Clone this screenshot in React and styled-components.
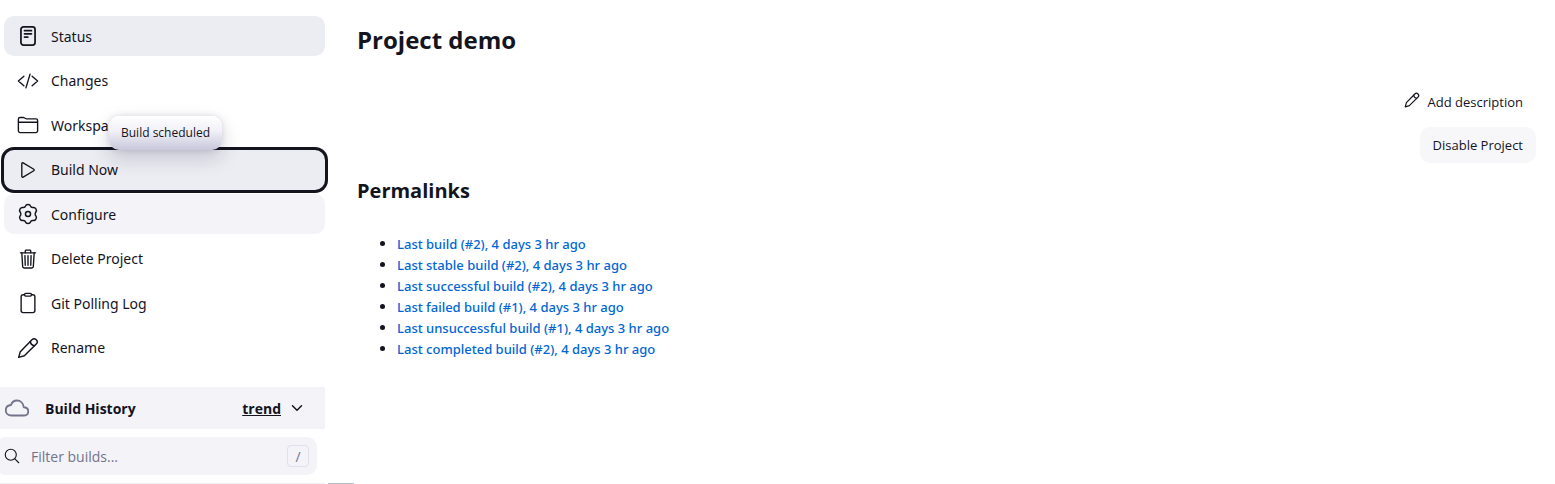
import React from "react";
import styled, { createGlobalStyle, css } from "styled-components";
import {
  IoChevronDownOutline,
  IoClipboardOutline,
  IoCloudOutline,
  IoCodeSlashOutline,
  IoFolderOutline,
  IoPlayOutline,
  IoSearchOutline,
  IoTrashOutline,
} from "react-icons/io5";

const GlobalStyle = createGlobalStyle`
  *, *::before, *::after { box-sizing: border-box; }
  body {
    margin: 0;
    background: #fff;
    color: #14141f;
    font-family: "Open Sans", "Noto Sans", sans-serif;
    font-size: 14px;
    line-height: 21px;
  }
`;

const Page = styled.div`
  display: grid;
  grid-template-columns: 325px 1fr;
  gap: 32px;
`;

const Sidebar = styled.aside`
  display: flex;
  flex-direction: column;
`;

const Tasks = styled.nav`
  display: flex;
  flex-direction: column;
  justify-content: space-between;
  min-height: 352px;
  margin: 16px 0 19px 4px;
`;

const TaskSlot = styled.div`
  position: relative;
`;

const Task = styled.a`
  display: flex;
  align-items: center;
  gap: 12px;
  height: 40px;
  padding: 0 13px;
  border-radius: 10px;
  color: #14141f;
  font-family: "Noto Sans", sans-serif;
  text-decoration: none;
  background: ${(p) => p.$fill || "transparent"};
  ${(p) => p.$focused && css`box-shadow: 0 0 0 3px #14141f;`}

  svg {
    flex: none;
    width: 22px;
    height: 22px;
  }
`;

const Tooltip = styled.div`
  position: absolute;
  z-index: 1;
  left: 105px;
  bottom: 40px;
  padding: 7px 12px;
  border-radius: 10px;
  background: linear-gradient(#ffffff, #f0f0f6 45%, #c8c7dc);
  box-shadow: 0 0 6px rgba(20, 20, 60, 0.12), 0 8px 20px rgba(20, 20, 60, 0.18);
  font-size: 12px;
  line-height: 20px;
  white-space: nowrap;
`;

const HistoryHeader = styled.header`
  display: flex;
  align-items: center;
  height: 42px;
  padding: 0 20px 0 5px;
  background: #f3f3f8;
`;

const CloudIcon = styled(IoCloudOutline)`
  width: 24px;
  height: 24px;
  color: #73738c;

  path {
    stroke-width: 40px;
  }
`;

const HistoryTitle = styled.h2`
  flex: 1;
  margin: 0 0 0 16px;
  font-size: 14px;
  line-height: 21px;
  font-weight: 700;
`;

const TrendLink = styled.a`
  margin-right: 8px;
  color: inherit;
  font-weight: 700;
`;

const CollapseButton = styled.button`
  display: flex;
  padding: 0;
  border: 0;
  background: none;
  color: inherit;

  svg {
    width: 16px;
    height: 16px;
  }
`;

const FilterBar = styled.label`
  display: flex;
  align-items: center;
  gap: 10px;
  height: 38px;
  margin: 8px 8px 8px 0;
  padding: 0 8px 0 3px;
  border-radius: 4px 10px 10px 4px;
  background: #f3f3f8;

  svg {
    width: 18px;
    height: 18px;
  }
`;

const FilterInput = styled.input`
  flex: 1;
  min-width: 0;
  padding: 0;
  border: 0;
  outline: 0;
  background: none;
  color: #14141f;
  font: inherit;

  &::placeholder {
    color: #73738c;
    opacity: 1;
  }
`;

const KeyHint = styled.kbd`
  display: grid;
  place-items: center;
  width: 22px;
  height: 22px;
  border: 1px solid #e0dfee;
  border-radius: 4px;
  color: #73738c;
  font: inherit;
`;

const BuildList = styled.div`
  border-top: 1px solid #ededf2;
`;

const Main = styled.main`
  display: flex;
  flex-direction: column;
  padding: 22px 19px 0 0;
`;

const Title = styled.h1`
  margin: 0;
  font-size: 24px;
  line-height: 36px;
  font-weight: 700;
`;

const Actions = styled.div`
  display: flex;
  flex-direction: column;
  align-items: flex-end;
  gap: 7px;
  margin-top: 26px;
`;

const DescriptionLink = styled.a`
  display: flex;
  align-items: center;
  gap: 8px;
  height: 36px;
  padding: 0 13px;
  color: #14141f;
  font-size: 13px;
  text-decoration: none;

  svg {
    width: 16px;
    height: 16px;
    margin-bottom: 4px;
  }
`;

const DisableButton = styled.button`
  height: 36px;
  padding: 0 13px;
  border: 0;
  border-radius: 10px;
  background: #f7f7fa;
  color: #14141f;
  font-family: inherit;
  font-size: 13px;
`;

const SectionTitle = styled.h2`
  margin: 12px 0 0;
  font-size: 20px;
  line-height: 32px;
  font-weight: 700;
`;

const Permalinks = styled.ul`
  margin: 26px 0 0;
  padding-left: 40px;
  font-family: "Noto Sans", sans-serif;
  font-size: 13px;

  li::marker {
    font-size: 14px;
  }
`;

const PermalinkItem = styled.li`
  height: 21px;
`;

const Permalink = styled.a`
  color: #0066d6;
  font-weight: 500;
  text-decoration: none;
`;

const StatusStrip = styled.div`
  position: fixed;
  left: 328px;
  bottom: 0;
  width: 26px;
  height: 1px;
  background: #b4bfc6;
`;

const Line = ({ children, width = 1.6 }) => (
  <svg
    viewBox="0 0 24 24"
    fill="none"
    stroke="currentColor"
    strokeWidth={width}
    strokeLinecap="round"
    strokeLinejoin="round"
    aria-hidden="true"
  >
    {children}
  </svg>
);

const StatusIcon = () => (
  <Line width={1.9}>
    <rect x="4.3" y="2" width="15.4" height="20" rx="2.8" />
    <path d="M8.2 6.2h7.6M8.2 9.6h7.6M8.2 13.2h3.6" />
  </Line>
);

const GearIcon = () => (
  <Line>
    <path d="M9.3 3.2c.6-2 4.800-2 5.400 0 .5 1.500 1.500 2 3 1.700 2.300-.5 4.500 3.100 2.900 4.900-1 1.100-1 3.300 0 4.400 1.600 1.800-.6 5.400-2.900 4.900-1.500-.3-2.500.2-3 1.700-.6 2-4.800 2-5.400 0-.5-1.500-1.500-2-3-1.700-2.300.5-4.500-3.100-2.900-4.900 1-1.100 1-3.300 0-4.400-1.600-1.800.6-5.400 2.900-4.900 1.500.3 2.500-.2 3-1.700z" />
    <circle cx="12" cy="12" r="2.8" />
  </Line>
);

const PencilIcon = ({ width }) => (
  <Line width={width}>
    <path d="M1.800 22.200l1.800-6.200L16.300 3a3.300 3.300 0 0 1 4.700 4.700L8 20.400z" />
    <path d="M14.600 4.800c.2 2.600 2 4.400 4.600 4.600" />
  </Line>
);

const tasks = [
  { label: "Status", icon: StatusIcon, fill: "#ecedf2" },
  { label: "Changes", icon: IoCodeSlashOutline },
  { label: "Workspace", icon: IoFolderOutline },
  { label: "Build Now", icon: IoPlayOutline, fill: "#ecedf2", focused: true, tip: "Build scheduled" },
  { label: "Configure", icon: GearIcon, fill: "#f3f3f8" },
  { label: "Delete Project", icon: IoTrashOutline },
  { label: "Git Polling Log", icon: IoClipboardOutline },
  { label: "Rename", icon: PencilIcon },
];

const permalinks = [
  "Last build (#2), 4 days 3 hr ago",
  "Last stable build (#2), 4 days 3 hr ago",
  "Last successful build (#2), 4 days 3 hr ago",
  "Last failed build (#1), 4 days 3 hr ago",
  "Last unsuccessful build (#1), 4 days 3 hr ago",
  "Last completed build (#2), 4 days 3 hr ago",
];

export default function App() {
  return (
    <>
      <GlobalStyle />
      <Page>
        <Sidebar>
          <Tasks>
            {tasks.map(({ label, icon: Icon, fill, focused, tip }) => (
              <TaskSlot key={label}>
                <Task href="#" $fill={fill} $focused={focused}>
                  <Icon />
                  {label}
                </Task>
                {tip && <Tooltip role="tooltip">{tip}</Tooltip>}
              </TaskSlot>
            ))}
          </Tasks>
          <HistoryHeader>
            <CloudIcon />
            <HistoryTitle>Build History</HistoryTitle>
            <TrendLink href="#">trend</TrendLink>
            <CollapseButton aria-label="Collapse">
              <IoChevronDownOutline />
            </CollapseButton>
          </HistoryHeader>
          <FilterBar>
            <IoSearchOutline />
            <FilterInput placeholder="Filter builds..." aria-label="Filter builds" />
            <KeyHint>/</KeyHint>
          </FilterBar>
          <BuildList />
        </Sidebar>
        <Main>
          <Title>Project demo</Title>
          <Actions>
            <DescriptionLink href="#">
              <PencilIcon width={1.8} />
              Add description
            </DescriptionLink>
            <DisableButton>Disable Project</DisableButton>
          </Actions>
          <SectionTitle>Permalinks</SectionTitle>
          <Permalinks>
            {permalinks.map((text) => (
              <PermalinkItem key={text}>
                <Permalink href="#">{text}</Permalink>
              </PermalinkItem>
            ))}
          </Permalinks>
        </Main>
      </Page>
      <StatusStrip />
    </>
  );
}
